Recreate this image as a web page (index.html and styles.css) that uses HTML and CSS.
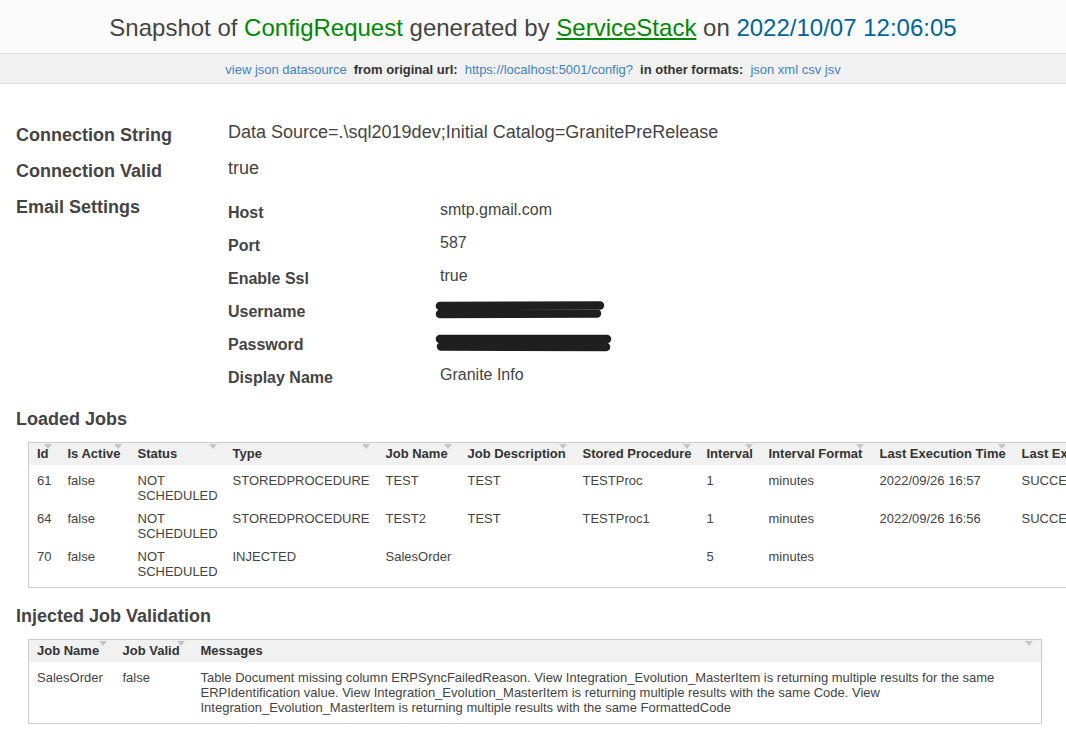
FILE: index.html
```html
<!DOCTYPE html>
<html lang="en">
<head>
<meta charset="utf-8">
<title>Snapshot of ConfigRequest</title>
<link rel="stylesheet" href="styles.css">
</head>
<body>
<h1 class="title">Snapshot of <span class="type">ConfigRequest</span> generated by <a class="brand" href="#">ServiceStack</a> on <span class="date">2022/10/07 12:06:05</span></h1>
<div class="links">
  <a href="#">view json datasource</a>
  <b>from original url:</b>
  <a href="#">https://localhost:5001/config?</a>
  <b>in other formats:</b>
  <span class="formats"><a href="#">json</a> <a href="#">xml</a> <a href="#">csv</a> <a href="#">jsv</a></span>
</div>
<main class="content">
  <div class="props">
    <div class="prop">
      <div class="k">Connection String</div>
      <div class="v">Data Source=.\sql2019dev;Initial Catalog=GranitePreRelease</div>
    </div>
    <div class="prop">
      <div class="k">Connection Valid</div>
      <div class="v">true</div>
    </div>
    <div class="prop">
      <div class="k">Email Settings</div>
      <div class="v nested">
        <div class="sub"><div class="sk">Host</div><div class="sv">smtp.gmail.com</div></div>
        <div class="sub"><div class="sk">Port</div><div class="sv">587</div></div>
        <div class="sub"><div class="sk">Enable Ssl</div><div class="sv">true</div></div>
        <div class="sub"><div class="sk">Username</div><div class="sv"><svg class="redact" width="172" height="18" viewBox="0 0 172 18"><path d="M5 5 L165 4.5 M5 13 L162 12.5" stroke="#1f1f1f" stroke-width="8.5" stroke-linecap="round" fill="none"/></svg></div></div>
        <div class="sub"><div class="sk">Password</div><div class="sv"><svg class="redact" width="178" height="18" viewBox="0 0 178 18"><path d="M5 5 L172 5 M6 12.5 L171 13" stroke="#1f1f1f" stroke-width="8.5" stroke-linecap="round" fill="none"/></svg></div></div>
        <div class="sub"><div class="sk">Display Name</div><div class="sv">Granite Info</div></div>
      </div>
    </div>
  </div>

  <h2 class="section first">Loaded Jobs</h2>
  <table class="grid jobs">
    <colgroup>
      <col class="j1"><col class="j2"><col class="j3"><col class="j4"><col class="j5"><col class="j6"><col class="j7"><col class="j8"><col class="j9"><col class="j10"><col class="j11">
    </colgroup>
    <thead>
      <tr><th>Id</th><th>Is Active</th><th>Status</th><th>Type</th><th>Job Name</th><th>Job Description</th><th>Stored Procedure</th><th>Interval</th><th>Interval Format</th><th>Last Execution Time</th><th>Last Execution Status</th></tr>
    </thead>
    <tbody>
      <tr><td>61</td><td>false</td><td>NOT SCHEDULED</td><td>STOREDPROCEDURE</td><td>TEST</td><td>TEST</td><td>TESTProc</td><td>1</td><td>minutes</td><td>2022/09/26 16:57</td><td>SUCCESS</td></tr>
      <tr><td>64</td><td>false</td><td>NOT SCHEDULED</td><td>STOREDPROCEDURE</td><td>TEST2</td><td>TEST</td><td>TESTProc1</td><td>1</td><td>minutes</td><td>2022/09/26 16:56</td><td>SUCCESS</td></tr>
      <tr><td>70</td><td>false</td><td>NOT SCHEDULED</td><td>INJECTED</td><td>SalesOrder</td><td></td><td></td><td>5</td><td>minutes</td><td></td><td></td></tr>
    </tbody>
  </table>

  <h2 class="section">Injected Job Validation</h2>
  <table class="grid validation">
    <colgroup>
      <col class="v1"><col class="v2"><col class="v3">
    </colgroup>
    <thead>
      <tr><th>Job Name</th><th>Job Valid</th><th>Messages</th></tr>
    </thead>
    <tbody>
      <tr><td>SalesOrder</td><td>false</td><td>Table Document missing column ERPSyncFailedReason. View Integration_Evolution_MasterItem is returning multiple results for the same ERPIdentification value. View Integration_Evolution_MasterItem is returning multiple results with the same Code. View Integration_Evolution_MasterItem is returning multiple results with the same FormattedCode</td></tr>
    </tbody>
  </table>
</main>
</body>
</html>
```
FILE: styles.css
```css
html, body {
  margin: 0;
  padding: 0;
}
body {
  overflow-x: hidden;
  font-family: "Liberation Sans", Arial, Helvetica, sans-serif;
  color: #444;
  background: #fff;
}

.title {
  margin: 0;
  padding: 13px 0 10px;
  background: #fbfbfb;
  border-bottom: 1px solid #ddd;
  text-align: center;
  font-size: 24px;
  line-height: 30px;
  font-weight: normal;
  color: #444;
}
.title .type { color: #080; }
.title .brand { color: #080; text-decoration: underline; }
.title .date { color: #069; }

.links {
  display: flex;
  justify-content: center;
  gap: 7px;
  padding: 8px 0 6px;
  background: #f1f1f1;
  border-bottom: 1px solid #ddd;
  font-size: 13px;
  line-height: 15px;
}
.links a { color: #4183c4; text-decoration: none; }
.links b { color: #333; }

.content {
  padding: 37px 16px 0;
}

.prop { display: flex; }
.prop + .prop { margin-top: 11px; }
.k {
  flex: none;
  width: 212px;
  padding-top: 3px;
  font-size: 18px;
  line-height: 22px;
  font-weight: bold;
}
.v {
  font-size: 18px;
  line-height: 22px;
}
.nested { padding-top: 7px; }
.sub { display: flex; }
.sub + .sub { margin-top: 10px; }
.sk {
  flex: none;
  width: 212px;
  padding-top: 3px;
  font-size: 16px;
  line-height: 20px;
  font-weight: bold;
}
.sv {
  font-size: 16px;
  line-height: 20px;
}
.redact {
  display: block;
  margin: 2px 0 0 -5px;
}

.section {
  margin: 17px 0 12px;
  font-size: 18px;
  line-height: 22px;
  font-weight: bold;
  color: #444;
}
.section.first { margin-top: 20px; }

.grid {
  margin-left: 12px;
  border-collapse: collapse;
  border: 1px solid #ccc;
  table-layout: fixed;
  font-size: 13px;
  line-height: 15px;
}
.grid th {
  position: relative;
  padding: 3px 8px 4px;
  background: #f1f1f1;
  color: #333;
  font-weight: bold;
  text-align: left;
  white-space: nowrap;
}
.grid th::after {
  content: "";
  position: absolute;
  top: 1px;
  right: 8px;
  border-left: 4px solid transparent;
  border-right: 4px solid transparent;
  border-top: 5px solid #c6c6c6;
}
.grid td {
  padding: 8px 8px 0;
  vertical-align: top;
  color: #444;
}
.grid tbody tr:last-child td { padding-bottom: 8px; }

.jobs { width: 1145px; }
.j1 { width: 31px; }
.j2 { width: 70px; }
.j3 { width: 95px; }
.j4 { width: 153px; }
.j5 { width: 82px; }
.j6 { width: 115px; }
.j7 { width: 124px; }
.j8 { width: 62px; }
.j9 { width: 111px; }
.j10 { width: 142px; }
.j11 { width: 160px; }

.validation { width: 1014px; }
.v1 { width: 86px; }
.v2 { width: 78px; }
```
